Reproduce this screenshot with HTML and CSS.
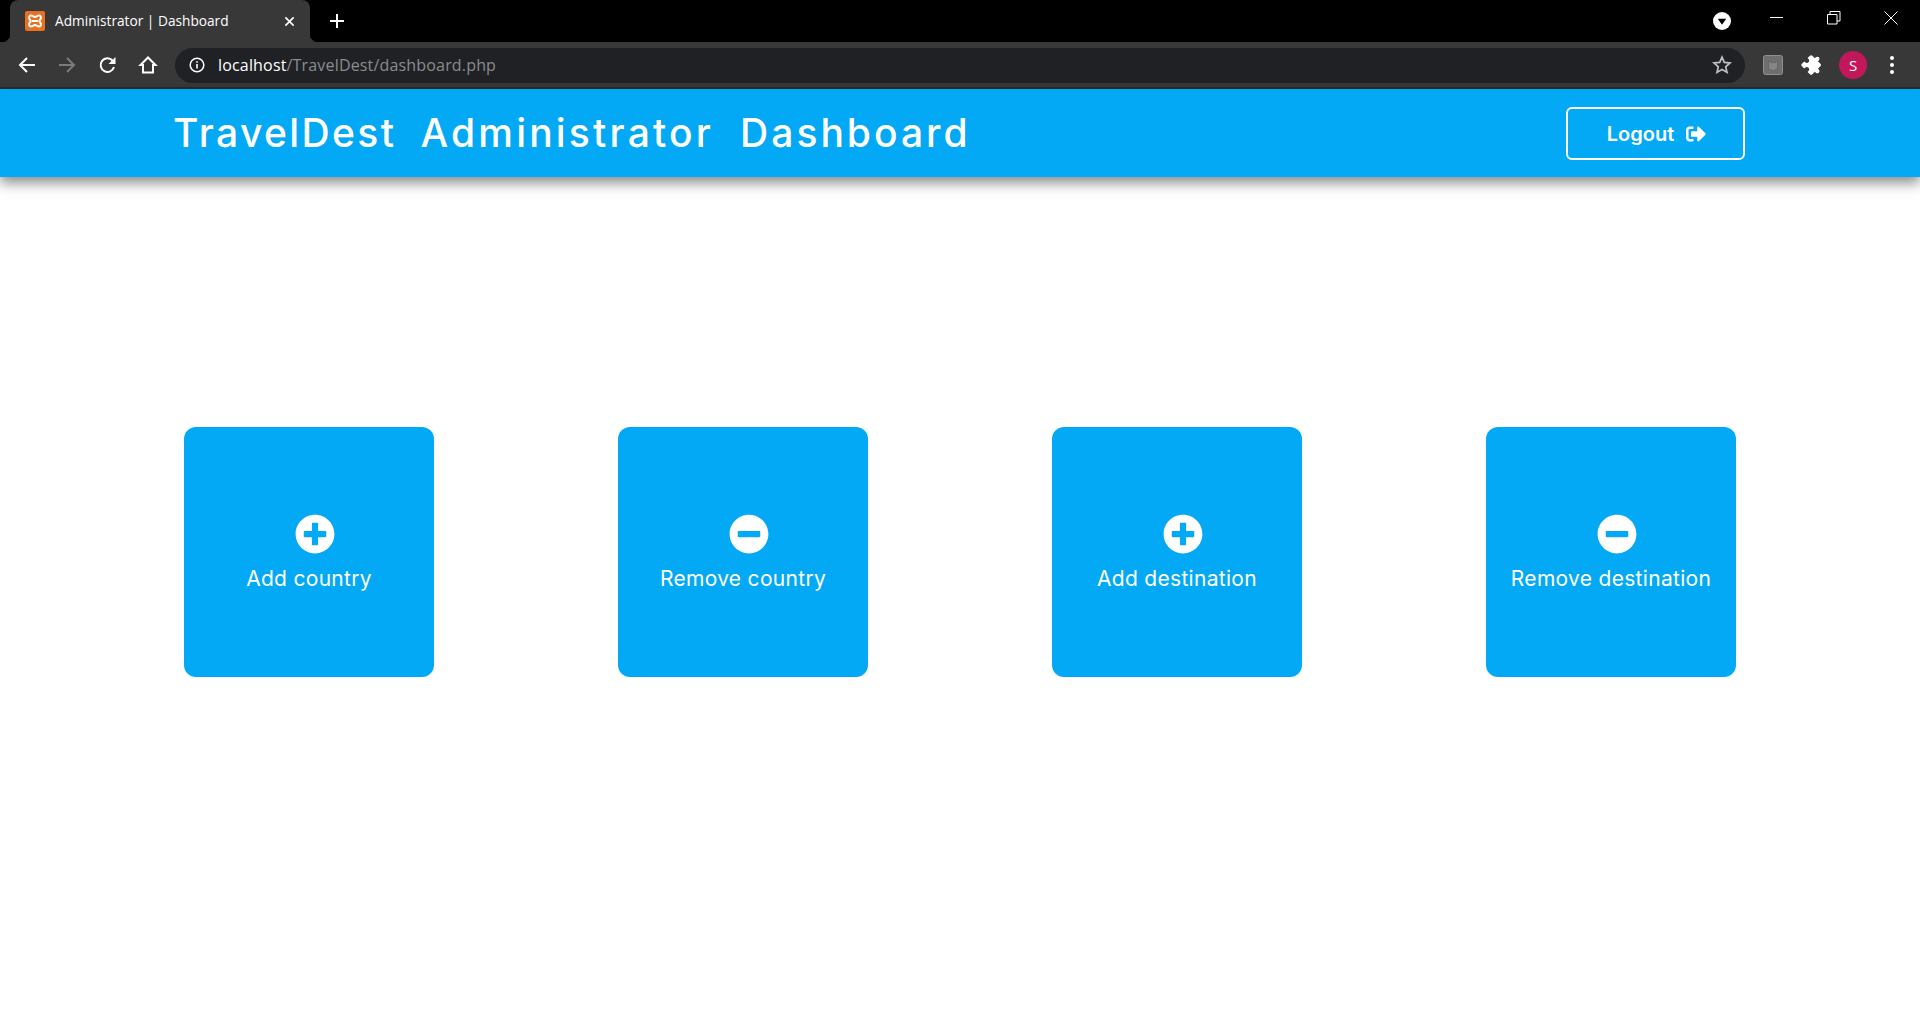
FILE: index.html
```html
<!DOCTYPE html>
<html lang="en">
<head>
  <meta charset="UTF-8" />
  <meta name="viewport" content="width=device-width, initial-scale=1.0" />
  <title>Administrator | Dashboard</title>
  <link rel="stylesheet" href="styles.css">
</head>
<body>
  <div class="browser">
    <div class="tabstrip">
      <div class="tab">
        <svg class="favicon" viewBox="0 0 20 20">
          <rect width="20" height="20" rx="2" fill="#e8701f"/>
          <path d="M6 4.500c2 0 2.600 1.400 4 1.400s2-1.400 4-1.400 2.500 2.600 1.200 4c-.7.7-.9 1-.9 1.500s.2.800.9 1.500c1.300 1.400.8 4-1.200 4s-2.600-1.400-4-1.400-2 1.400-4 1.400-2.500-2.600-1.200-4c.7-.7.900-1 .9-1.500s-.2-.8-.9-1.500C3.500 7.100 4 4.500 6 4.500z" fill="none" stroke="#fff" stroke-width="2"/>
          <path d="M7 10h6" stroke="#fff" stroke-width="2"/>
        </svg>
        <span class="tab-title">Administrator | Dashboard</span>
        <svg class="tab-close" viewBox="0 0 12 12"><path d="M1.500 1.500l9 9M10.500 1.500l-9 9" stroke="#fff" stroke-width="1.8"/></svg>
      </div>
      <svg class="new-tab" viewBox="0 0 14 14"><path d="M7 0v14M0 7h14" stroke="#fff" stroke-width="2"/></svg>
      <div class="window-controls">
        <svg class="tab-search" viewBox="0 0 18 18"><circle cx="9" cy="9" r="9" fill="#fff"/><path d="M4.800 6.800h8.400L9 12.800z" fill="#000"/></svg>
        <svg class="win-btn" viewBox="0 0 14 14"><path d="M0 6.500h13" stroke="#fff"/></svg>
        <svg class="win-btn" viewBox="0 0 14 14"><path d="M.5 3.500H10V13H.5zM3 3.500V.5h10V10h-3" fill="none" stroke="#fff"/></svg>
        <svg class="win-btn" viewBox="0 0 14 14"><path d="M.5.500l13 13M13.500.500l-13 13" stroke="#fff"/></svg>
      </div>
    </div>
    <div class="toolbar">
      <svg class="tool-icon" viewBox="0 0 20 20"><path d="M18 10H3M10 3l-7 7 7 7" fill="none" stroke="#fff" stroke-width="2"/></svg>
      <svg class="tool-icon" viewBox="0 0 20 20"><path d="M2 10h15M10 3l7 7-7 7" fill="none" stroke="#7b7b7b" stroke-width="2"/></svg>
      <svg class="tool-icon reload" viewBox="0 0 20 20"><path d="M16 12a6.800 6.800 0 1 1-1.500-6.500" fill="none" stroke="#fff" stroke-width="2"/><path d="M17.500 2v7h-7z" fill="#fff"/></svg>
      <svg class="tool-icon" viewBox="0 0 20 20"><path d="M10 2.500L2.500 10H5v7.500h10V10h2.500z" fill="none" stroke="#fff" stroke-width="2"/></svg>
      <div class="urlbar">
        <svg class="info-icon" viewBox="0 0 16 16"><circle cx="8" cy="8" r="6.800" fill="none" stroke="#fff" stroke-width="1.5"/><path d="M8 7v4.500M8 4.200v1.600" stroke="#fff" stroke-width="1.6"/></svg>
        <span class="url"><span class="url-host">localhost</span>/TravelDest/dashboard.php</span>
        <svg class="star-icon" viewBox="0 0 20 20"><path d="M10 2.200l2.300 5.200 5.700.6-4.300 3.800 1.300 5.600-5-2.900-5 2.900 1.300-5.600L2 8l5.700-.6z" fill="none" stroke="#bdc1c6" stroke-width="1.7"/></svg>
      </div>
      <div class="extensions">
        <svg class="ext-box" viewBox="0 0 20 20"><rect x=".5" y=".5" width="19" height="19" rx="2" fill="#6f6f6f" stroke="#8f8f8f"/><path d="M5.500 5.500L8 7.500h4l2.500-2v8L10 16l-4.500-2.500z" fill="#858585" stroke="#666"/></svg>
        <svg class="puzzle" viewBox="0 0 24 24"><path d="M20.500 11H19V7c0-1.100-.9-2-2-2h-4V3.500C13 2.120 11.880 1 10.500 1S8 2.120 8 3.500V5H4c-1.100 0-1.990.9-1.990 2v3.800H3.500c1.490 0 2.700 1.210 2.700 2.700s-1.210 2.700-2.700 2.700H2V20c0 1.100.9 2 2 2h3.800v-1.500c0-1.490 1.210-2.700 2.700-2.700 1.490 0 2.700 1.210 2.700 2.700V22H17c1.100 0 2-.9 2-2v-4h1.500c1.380 0 2.500-1.120 2.500-2.500S21.880 11 20.500 11z" fill="#fff"/></svg>
        <div class="avatar">S</div>
        <div class="dots"><i></i><i></i><i></i></div>
      </div>
    </div>
  </div>

  <header class="topbar">
    <h1><span class="word-brand">TravelDest</span> <span class="word-admin">Administrator</span> <span class="word-dash">Dashboard</span></h1>
    <a class="logout" href="#">Logout
      <svg viewBox="0 0 512 512"><path d="M497 273L329 441c-15 15-41 4.500-41-17v-96H152c-13.300 0-24-10.700-24-24v-96c0-13.300 10.700-24 24-24h136V88c0-21.400 25.900-32 41-17l168 168c9.300 9.400 9.300 24.600 0 34zM192 436v-40c0-6.600-5.400-12-12-12H96c-17.700 0-32-14.300-32-32V160c0-17.700 14.300-32 32-32h84c6.600 0 12-5.400 12-12V76c0-6.600-5.400-12-12-12H96c-53 0-96 43-96 96v192c0 53 43 96 96 96h84c6.600 0 12-5.400 12-12z" fill="#fff"/></svg>
    </a>
  </header>

  <main class="cards">
    <a class="card" href="#">
      <svg viewBox="0 0 512 512"><path d="M256 8C119 8 8 119 8 256s111 248 248 248 248-111 248-248S393 8 256 8zm144 276c0 6.600-5.400 12-12 12h-92v92c0 6.600-5.400 12-12 12h-56c-6.600 0-12-5.400-12-12v-92h-92c-6.600 0-12-5.400-12-12v-56c0-6.600 5.400-12 12-12h92v-92c0-6.600 5.400-12 12-12h56c6.600 0 12 5.400 12 12v92h92c6.600 0 12 5.400 12 12v56z" fill="#fff"/></svg>
      <span>Add country</span>
    </a>
    <a class="card" href="#">
      <svg viewBox="0 0 512 512"><path d="M256 8C119 8 8 119 8 256s111 248 248 248 248-111 248-248S393 8 256 8zM124 296c-6.600 0-12-5.400-12-12v-56c0-6.600 5.400-12 12-12h264c6.600 0 12 5.400 12 12v56c0 6.600-5.400 12-12 12H124z" fill="#fff"/></svg>
      <span>Remove country</span>
    </a>
    <a class="card" href="#">
      <svg viewBox="0 0 512 512"><path d="M256 8C119 8 8 119 8 256s111 248 248 248 248-111 248-248S393 8 256 8zm144 276c0 6.600-5.400 12-12 12h-92v92c0 6.600-5.400 12-12 12h-56c-6.600 0-12-5.400-12-12v-92h-92c-6.600 0-12-5.400-12-12v-56c0-6.600 5.400-12 12-12h92v-92c0-6.600 5.400-12 12-12h56c6.600 0 12 5.400 12 12v92h92c6.600 0 12 5.400 12 12v56z" fill="#fff"/></svg>
      <span>Add destination</span>
    </a>
    <a class="card" href="#">
      <svg viewBox="0 0 512 512"><path d="M256 8C119 8 8 119 8 256s111 248 248 248 248-111 248-248S393 8 256 8zM124 296c-6.600 0-12-5.400-12-12v-56c0-6.600 5.400-12 12-12h264c6.600 0 12 5.400 12 12v56c0 6.600-5.400 12-12 12H124z" fill="#fff"/></svg>
      <span>Remove destination</span>
    </a>
  </main>
</body>
</html>
```

FILE: styles.css
```css
html, body {
  height: 100%;
}

body {
  font-family: "Inter", "Liberation Sans", sans-serif;
  background: white;
  color: white;
  margin: 0;
  padding: 0;
  display: flex;
  flex-direction: column;
  overflow: hidden;
}

/* browser chrome */
.browser {
  flex: none;
  background: #000;
}

.tabstrip {
  height: 42px;
  display: flex;
  align-items: center;
}

.tab {
  position: relative;
  width: 300px;
  height: 42px;
  margin-left: 10px;
  background: #383838;
  border-radius: 8px 8px 0 0;
  display: flex;
  align-items: center;
  box-sizing: border-box;
  padding: 0 14px 0 15px;
}

.tab::before,
.tab::after {
  content: "";
  position: absolute;
  bottom: 0;
  width: 8px;
  height: 8px;
}

.tab::before {
  left: -8px;
  background: radial-gradient(circle at 0 0, #000 8px, #383838 8.5px);
}

.tab::after {
  right: -8px;
  background: radial-gradient(circle at 100% 0, #000 8px, #383838 8.5px);
}

.favicon {
  width: 20px;
  height: 20px;
  flex: none;
}

.tab-title {
  margin-left: 10px;
  margin-bottom: 1px;
  font-family: "Open Sans", sans-serif;
  font-size: 13.7px;
  color: #fff;
  flex: 1;
  white-space: nowrap;
}

.tab-close {
  width: 11px;
  height: 11px;
  margin-right: 1px;
}

.new-tab {
  width: 14px;
  height: 14px;
  margin-left: 20px;
}

.window-controls {
  margin-left: auto;
  display: flex;
  align-items: center;
  padding-right: 22px;
}

.tab-search {
  width: 18px;
  height: 18px;
  margin-right: 39px;
}

.win-btn {
  width: 14px;
  height: 14px;
  margin-left: 43px;
  margin-top: -7px;
}

.win-btn:nth-child(2) {
  margin-left: 0;
}

.toolbar {
  height: 47px;
  background: #383838;
  box-shadow: inset 0 -2px 0 #2a2a2a;
  display: flex;
  align-items: center;
  gap: 20px;
  padding: 0 23px 1px 17px;
  box-sizing: border-box;
}

.tool-icon {
  width: 20px;
  height: 20px;
  flex: none;
}

.reload {
  margin-left: 1px;
}

.urlbar {
  flex: 1;
  height: 35px;
  margin-left: -3px;
  background: #202124;
  border-radius: 18px;
  display: flex;
  align-items: center;
  padding: 0 13px 0 14px;
}

.info-icon {
  width: 16px;
  height: 16px;
  flex: none;
}

.url {
  margin-left: 13px;
  font-family: "Open Sans", sans-serif;
  font-size: 16px;
  letter-spacing: 0.17px;
  color: #8b8c8e;
  white-space: nowrap;
}

.url-host {
  color: #fff;
}

.star-icon {
  width: 20px;
  height: 20px;
  margin-left: auto;
}

.extensions {
  display: flex;
  align-items: center;
  margin-left: -2px;
}

.ext-box {
  width: 20px;
  height: 20px;
}

.puzzle {
  width: 22px;
  height: 22px;
  margin-left: 19px;
  transform: rotate(45deg) scale(.95);
}

.avatar {
  width: 28px;
  height: 28px;
  margin-left: 15px;
  border-radius: 50%;
  background: #c2185b;
  font-family: "Open Sans", sans-serif;
  font-size: 15px;
  line-height: 28px;
  text-align: center;
}

.dots {
  width: 10px;
  margin-left: 20px;
  display: flex;
  flex-direction: column;
  align-items: center;
  gap: 3px;
}

.dots i {
  width: 4px;
  height: 4px;
  border-radius: 50%;
  background: #fff;
}

/* page */
.topbar {
  flex: none;
  height: 88px;
  background: #03a9f4;
  box-shadow: 0 6px 12px rgba(0, 0, 0, 0.45);
  display: flex;
  align-items: center;
  justify-content: space-between;
  padding: 0 175px 0 173px;
}

h1 {
  margin: 0 0 2px;
  font-size: 39px;
  font-weight: 500;
  display: flex;
  gap: 24px;
  white-space: nowrap;
}

.word-brand {
  letter-spacing: 2.4px;
}

.word-admin {
  letter-spacing: 3.2px;
  margin-right: 2px;
}

.word-dash {
  letter-spacing: 3px;
}

.logout {
  width: 179px;
  height: 53px;
  box-sizing: border-box;
  border: 2px solid white;
  border-radius: 6px;
  padding: 1px 0 0 2px;
  color: white;
  text-decoration: none;
  font-size: 20px;
  font-weight: 600;
  display: flex;
  align-items: center;
  justify-content: center;
  gap: 12px;
}

.logout svg {
  width: 20px;
  height: 20px;
}

.cards {
  flex: 1;
  display: flex;
  justify-content: space-between;
  padding: 250px 184px 0;
}

.card {
  width: 250px;
  height: 250px;
  background: #03a9f4;
  border-radius: 12px;
  color: white;
  text-decoration: none;
  display: flex;
  flex-direction: column;
  align-items: center;
  justify-content: center;
  padding-top: 1px;
  box-sizing: border-box;
}

.card svg {
  width: 40px;
  height: 40px;
  margin-left: 12px;
  margin-bottom: 12px;
}

.card span {
  font-size: 21px;
  font-weight: 400;
  letter-spacing: 0.3px;
  line-height: 26px;
  white-space: nowrap;
}
```
